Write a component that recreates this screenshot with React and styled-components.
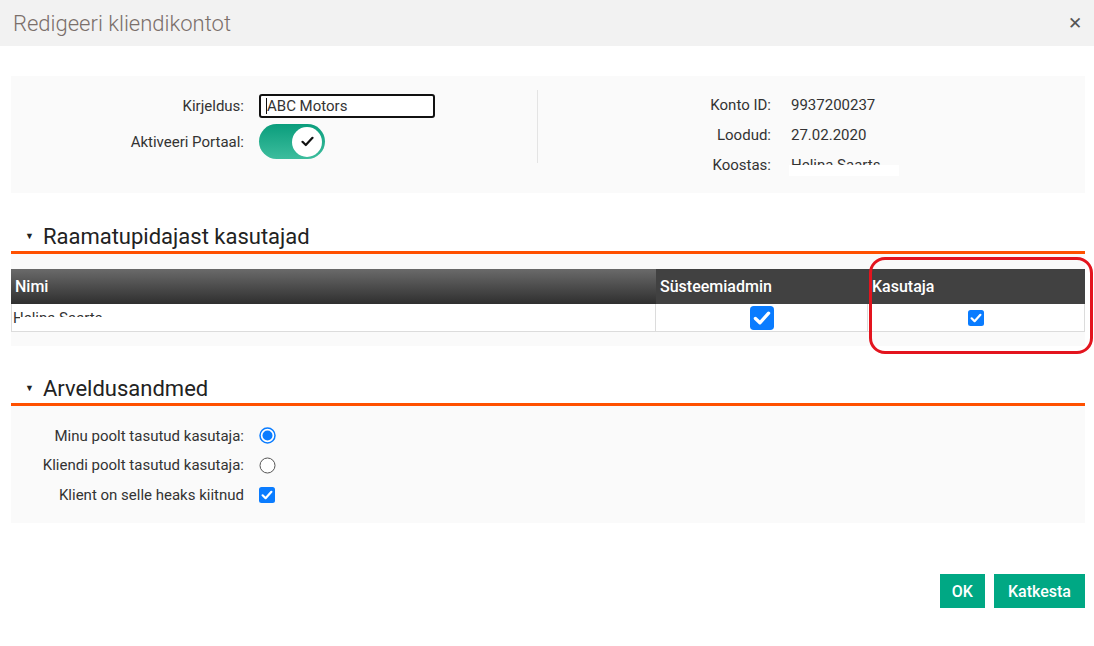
import React from "react";
import styled, { createGlobalStyle } from "styled-components";

const GlobalStyle = createGlobalStyle`
  body {
    margin: 0;
    background: #ffffff;
    font-family: Roboto, "Liberation Sans", sans-serif;
    color: #333333;
  }
`;

const Dialog = styled.div`
  width: 1094px;
  height: 646px;
  background: #ffffff;
`;

const Header = styled.div`
  height: 46px;
  background: #f2f2f2;
  display: flex;
  align-items: center;
  justify-content: space-between;
  padding: 0 12px 0 13px;
`;

const Title = styled.div`
  font-size: 22px;
  color: #7a6f6a;
  font-weight: 300;
`;

const Close = styled.div`
  font-size: 17px;
  color: #555555;
  line-height: 1;
`;

const Body = styled.div`
  padding: 30px 9px 0 11px;
`;

const TopPanel = styled.div`
  height: 117px;
  box-sizing: border-box;
  background: #fafafa;
  display: flex;
  align-items: flex-start;
  padding-top: 14px;
`;

const LeftCol = styled.div`
  width: 526px;
  display: grid;
  grid-template-columns: 233px auto;
  column-gap: 15px;
  row-gap: 6px;
  align-items: center;
  padding-top: 4px;
`;

const Divider = styled.div`
  width: 1px;
  height: 73px;
  background: #e4e4e4;
`;

const RightCol = styled.div`
  display: grid;
  grid-template-columns: 233px auto;
  column-gap: 20px;
  grid-auto-rows: 30px;
  align-items: center;
`;

const Label = styled.div`
  font-size: 15px;
  color: #333333;
  text-align: right;
  white-space: nowrap;
`;

const Value = styled.div`
  font-size: 15px;
  color: #333333;
  position: relative;
`;

const Redact = styled.span`
  position: absolute;
  left: ${(p) => p.left}px;
  top: ${(p) => p.top}px;
  width: ${(p) => p.w}px;
  height: ${(p) => p.h}px;
  background: #ffffff;
`;

const Input = styled.div`
  width: 176px;
  height: 24px;
  box-sizing: border-box;
  border: 2px solid #111111;
  border-radius: 3px;
  background: #ffffff;
  font-size: 15px;
  padding-left: 5px;
  display: flex;
  align-items: center;
  & span {
    border-left: 1px solid #111;
    line-height: 16px;
  }
`;

const Toggle = styled.div`
  width: 66px;
  height: 35px;
  border-radius: 18px;
  background: linear-gradient(180deg, #0a9d7c 0%, #3dbd9d 100%);
  display: flex;
  justify-content: flex-end;
  align-items: center;
  padding: 0 3px;
  box-sizing: border-box;
`;

const Knob = styled.div`
  width: 30px;
  height: 30px;
  border-radius: 50%;
  background: #ffffff;
  display: flex;
  align-items: center;
  justify-content: center;
`;

const SectionHead = styled.div`
  display: flex;
  align-items: center;
  margin-top: ${(p) => p.top}px;
  height: 30px;
  padding-left: 14px;
  border-bottom: 3px solid #ff5000;
  font-size: 22px;
  color: #222222;
`;

const Caret = styled.span`
  font-size: 9px;
  margin-right: 9px;
  color: #222;
`;

const TableArea = styled.div`
  position: relative;
  background: #fafafa;
  padding: 15px 0 14px;
`;

const Table = styled.div`
  display: grid;
  grid-template-columns: 645px 212px 217px;
`;

const HeadCell = styled.div`
  height: 35px;
  display: flex;
  align-items: center;
  padding-left: 4px;
  color: #ffffff;
  font-size: 16px;
  font-weight: 500;
  background: ${(p) =>
    p.sorted ? "linear-gradient(180deg, #6a6a6a 0%, #2f2f2f 100%)" : "#414141"};
`;

const Cell = styled.div`
  position: relative;
  height: 28px;
  box-sizing: border-box;
  background: #ffffff;
  border-bottom: 1px solid #dcdcdc;
  border-right: 1px solid #dcdcdc;
  border-left: ${(p) => (p.first ? "1px solid #dcdcdc" : "none")};
  display: flex;
  align-items: center;
  justify-content: ${(p) => (p.center ? "center" : "flex-start")};
  font-size: 15px;
  padding-left: ${(p) => (p.center ? 0 : 1)}px;
`;

const Highlight = styled.div`
  position: absolute;
  left: 858px;
  top: 3px;
  width: 224px;
  height: 97px;
  box-sizing: border-box;
  border: 3px solid #e3141e;
  border-radius: 16px;
  pointer-events: none;
`;

const BillingPanel = styled.div`
  background: #fafafa;
  height: 117px;
  box-sizing: border-box;
  padding-top: 15px;
  display: grid;
  grid-template-columns: 233px auto;
  column-gap: 15px;
  grid-auto-rows: 29.5px;
  align-items: center;
  align-content: start;
`;

const Footer = styled.div`
  display: flex;
  justify-content: flex-end;
  gap: 9px;
  padding: 51px 9px 0 0;
`;

const Button = styled.button`
  height: 34px;
  padding: 0 ${(p) => p.pad}px;
  border: none;
  background: #00a884;
  color: #ffffff;
  font-family: Roboto, "Liberation Sans", sans-serif;
  font-size: 16px;
  font-weight: 500;
`;

const CheckBox = ({ size = 16 }) => (
  <svg width={size} height={size} viewBox="0 0 16 16">
    <rect x="0" y="0" width="16" height="16" rx="2.5" fill="#0a7cff" />
    <path
      d="M3.6 8.3 L6.6 11.2 L12.4 4.8"
      fill="none"
      stroke="#ffffff"
      strokeWidth="2.2"
      strokeLinecap="round"
      strokeLinejoin="round"
    />
  </svg>
);

const Radio = ({ checked }) => (
  <svg width="17" height="17" viewBox="0 0 17 17">
    {checked ? (
      <>
        <circle cx="8.5" cy="8.5" r="7.5" fill="#ffffff" stroke="#0a7cff" strokeWidth="1.5" />
        <circle cx="8.5" cy="8.5" r="5" fill="#0a7cff" />
      </>
    ) : (
      <circle cx="8.5" cy="8.5" r="7.5" fill="#ffffff" stroke="#555" strokeWidth="1" />
    )}
  </svg>
);

const Tick = () => (
  <svg width="13" height="11" viewBox="0 0 13 11">
    <path
      d="M1.5 5.8 L4.8 9 L11.5 1.8"
      fill="none"
      stroke="#111"
      strokeWidth="2.2"
      strokeLinecap="round"
      strokeLinejoin="round"
    />
  </svg>
);

export default function App() {
  return (
    <Dialog>
      <GlobalStyle />
      <Header>
        <Title>Redigeeri kliendikontot</Title>
        <Close>✕</Close>
      </Header>
      <Body>
        <TopPanel>
          <LeftCol>
            <Label>Kirjeldus:</Label>
            <Input>
              <span>ABC Motors</span>
            </Input>
            <Label>Aktiveeri Portaal:</Label>
            <Toggle>
              <Knob>
                <Tick />
              </Knob>
            </Toggle>
          </LeftCol>
          <Divider />
          <RightCol>
            <Label>Konto ID:</Label>
            <Value>9937200237</Value>
            <Label>Loodud:</Label>
            <Value>27.02.2020</Value>
            <Label>Koostas:</Label>
            <Value>
              Helina Saarts
              <Redact left={-2} top={9} w={110} h={11} />
            </Value>
          </RightCol>
        </TopPanel>

        <SectionHead top={28}>
          <Caret>▼</Caret>
          Raamatupidajast kasutajad
        </SectionHead>
        <TableArea>
          <Table>
            <HeadCell sorted>Nimi</HeadCell>
            <HeadCell>Süsteemiadmin</HeadCell>
            <HeadCell>Kasutaja</HeadCell>
            <Cell first>
              Helina Saarts
              <Redact left={8} top={13} w={104} h={11} />
            </Cell>
            <Cell center>
              <CheckBox size={24} />
            </Cell>
            <Cell center>
              <CheckBox size={16} />
            </Cell>
          </Table>
          <Highlight />
        </TableArea>

        <SectionHead top={27}>
          <Caret>▼</Caret>
          Arveldusandmed
        </SectionHead>
        <BillingPanel>
          <Label>Minu poolt tasutud kasutaja:</Label>
          <Radio checked />
          <Label>Kliendi poolt tasutud kasutaja:</Label>
          <Radio />
          <Label>Klient on selle heaks kiitnud</Label>
          <CheckBox size={16} />
        </BillingPanel>
      </Body>
      <Footer>
        <Button pad={12}>OK</Button>
        <Button pad={14}>Katkesta</Button>
      </Footer>
    </Dialog>
  );
}
